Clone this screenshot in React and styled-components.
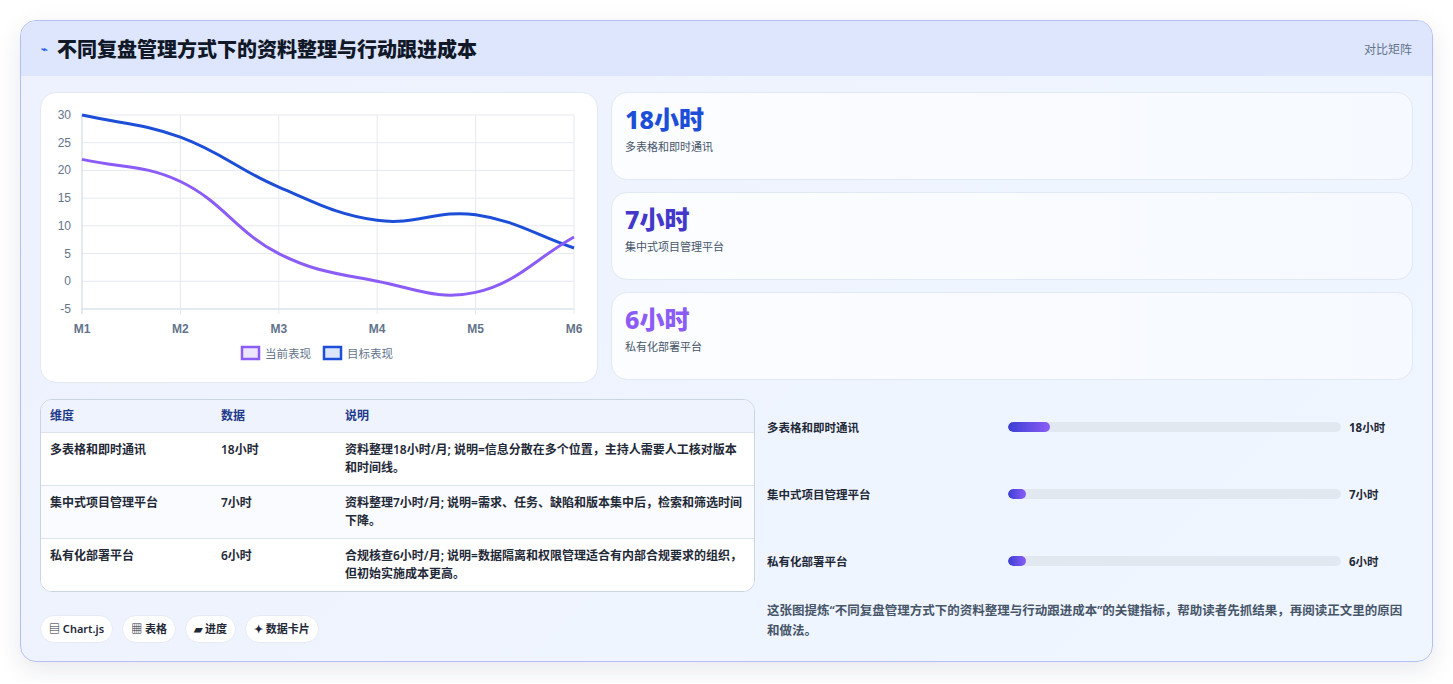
import React from "react";
import styled, { createGlobalStyle } from "styled-components";

const Global = createGlobalStyle`
  body { margin: 0; background: #fff; font-family: "Noto Sans", "Noto Sans CJK SC", sans-serif; }
`;
const Page = styled.div` padding: 20px 20px 21px 20px; `;
const Card = styled.div`
  border: 1px solid #b4c0f3; border-radius: 16px; overflow: hidden;
  background: linear-gradient(135deg, #edf2fe 0%, #f0f6ff 100%);
  box-shadow: 0 8px 24px rgba(30,41,90,0.10);
`;
const Header = styled.div`
  height: 55px; display: flex; align-items: center; justify-content: space-between;
  padding: 0 20px; background: #dde6fd;
`;
const Title = styled.h1`
  margin: 0; font-size: 20px; font-weight: 800; color: #111827; display: flex; align-items: center; gap: 9px;
`;
const Bolt = styled.span` color: #2563eb; font-size: 11px; `;
const Tag = styled.span` font-size: 12px; color: #64748b; `;
const Body = styled.div`
  padding: 16px 19px 18px 19px; display: grid; grid-template-columns: 715px 1fr; column-gap: 12px; row-gap: 16px;
`;
const Top = styled.div` grid-column: 1 / 3; display: grid; grid-template-columns: 558px 1fr; gap: 13px; `;
const Panel = styled.div` background: #fff; border: 1px solid #e2e8f4; border-radius: 16px; `;
const ChartBox = styled(Panel)` height: 289px; position: relative; `;
const Stats = styled.div` display: flex; flex-direction: column; gap: 12px; `;
const Stat = styled.div`
  height: 88px; box-sizing: border-box; padding: 10px 13px; border-radius: 16px;
  background: linear-gradient(90deg, #fbfdff, #f6f9ff); border: 1px solid #e2e8f4;
`;
const StatNum = styled.div` font-size: 25px; font-weight: 800; color: ${p => p.c}; line-height: 32px; `;
const StatLbl = styled.div` font-size: 11px; color: #475569; margin-top: 3px; `;
const Table = styled.div` border: 1px solid #cbd5e1; border-radius: 12px; overflow: hidden; background: #fff; `;
const Row = styled.div`
  display: grid; grid-template-columns: 171px 124px 1fr; padding: 0 8px 0 9px;
  background: ${p => p.head ? "#eef3fd" : p.alt ? "#f9fbfe" : "#fff"};
  border-top: ${p => p.first ? "none" : "1px solid #dde3ec"};
  min-height: ${p => p.head ? "32px" : "52px"}; align-items: ${p => p.head ? "center" : "start"};
  font-size: 12px; line-height: 18px; font-weight: 600;
  color: ${p => p.head ? "#1e3a8a" : "#1f2937"};
  & > div { padding-top: ${p => p.head ? "0" : "8px"}; }
`;
const Chips = styled.div` display: flex; gap: 9px; margin-top: 23px; `;
const Chip = styled.span`
  font-size: 11px; font-weight: 600; color: #1f2937; background: #fff; border: 1px solid #e6ebf3;
  border-radius: 14px; padding: 6px 8px; line-height: 14px;
`;
const Right = styled.div` display: flex; flex-direction: column; `;
const Bars = styled.div` display: flex; flex-direction: column; `;
const BarRow = styled.div`
  height: 67px; display: grid; grid-template-columns: 233px 333px 1fr; align-items: center; column-gap: 8px;
  font-size: 11.5px; font-weight: 700; color: #1f2937; padding-left: 0;
  &:first-child { margin-top: -6px; }
`;
const Track = styled.div` height: 10px; border-radius: 5px; background: #e2e8f0; overflow: hidden; `;
const Fill = styled.div` height: 100%; border-radius: 5px; background: linear-gradient(90deg, #3b3fd4, #8b5cf6); `;
const Note = styled.p` margin: 7px 0 0 0; font-size: 12.5px; line-height: 20px; color: #475569; font-weight: 600; `;

const L = 81 - 40, R = 573 - 40, T = 115 - 93, B = 309 - 93;
const xs = [0,1,2,3,4,5].map(i => L + i * (R - L) / 5);
const yv = v => T + (30 - v) * (B - T) / 35;
function path(data) {
  const p = data.map((v, i) => [xs[i], yv(v)]);
  const cps = p.map((c, i) => {
    const a = p[i - 1] || c, b = p[i + 1] || c;
    const d1 = Math.hypot(c[0] - a[0], c[1] - a[1]), d2 = Math.hypot(b[0] - c[0], b[1] - c[1]);
    const s = d1 + d2 || 1, fa = 0.4 * d1 / s, fb = 0.4 * d2 / s;
    return [[c[0] - fa * (b[0] - a[0]), c[1] - fa * (b[1] - a[1])], [c[0] + fb * (b[0] - a[0]), c[1] + fb * (b[1] - a[1])]];
  });
  let d = `M${p[0][0]},${p[0][1]}`;
  for (let i = 1; i < p.length; i++) d += ` C${cps[i-1][1].join(",")} ${cps[i][0].join(",")} ${p[i].join(",")}`;
  return d;
}

function Chart() {
  const ticks = [30,25,20,15,10,5,0,-5];
  return (
    <svg width="558" height="289" style={{ display: "block" }}>
      {ticks.map(t => <line key={t} x1={L} x2={R} y1={yv(t)} y2={yv(t)} stroke={t === -5 ? "#cbd5e1" : "#e5e9f0"} />)}
      {xs.map((x, i) => <line key={i} x1={x} x2={x} y1={T} y2={B + 5} stroke={i === 0 ? "#cbd5e1" : "#e5e9f0"} />)}
      {ticks.map(t => <text key={t} x={L - 11} y={yv(t) + 4} fontSize="12" fill="#64748b" textAnchor="end" fontFamily="Liberation Sans, sans-serif">{t}</text>)}
      {xs.map((x, i) => <text key={i} x={x} y={B + 24} fontSize="12" fontWeight="700" fill="#64748b" textAnchor="middle" fontFamily="Liberation Sans, sans-serif">M{i + 1}</text>)}
      <path d={path([30,26,17,11,12,6])} fill="none" stroke="#1d4ed8" strokeWidth="3" />
      <path d={path([22,18,5,0,-2,8])} fill="none" stroke="#8b5cf6" strokeWidth="3" />
      <rect x="201" y="254" width="17" height="12" fill="#ede4fd" stroke="#8b5cf6" strokeWidth="2.5" />
      <text x="224" y="265" fontSize="11.5" fill="#64748b">当前表现</text>
      <rect x="283" y="254" width="17" height="12" fill="#dbe6fb" stroke="#1d4ed8" strokeWidth="2.5" />
      <text x="306" y="265" fontSize="11.5" fill="#64748b">目标表现</text>
    </svg>
  );
}

const rows = [
  ["多表格和即时通讯", "18小时", "资料整理18小时/月; 说明=信息分散在多个位置，主持人需要人工核对版本和时间线。"],
  ["集中式项目管理平台", "7小时", "资料整理7小时/月; 说明=需求、任务、缺陷和版本集中后，检索和筛选时间下降。"],
  ["私有化部署平台", "6小时", "合规核查6小时/月; 说明=数据隔离和权限管理适合有内部合规要求的组织，但初始实施成本更高。"],
];
const bars = [["多表格和即时通讯", 12.5, "18小时"], ["集中式项目管理平台", 5.5, "7小时"], ["私有化部署平台", 5.5, "6小时"]];

export default function App() {
  return (
    <Page>
      <Global />
      <Card>
        <Header>
          <Title><Bolt>⌁</Bolt>不同复盘管理方式下的资料整理与行动跟进成本</Title>
          <Tag>对比矩阵</Tag>
        </Header>
        <Body>
          <Top>
            <ChartBox><Chart /></ChartBox>
            <Stats>
              <Stat><StatNum c="#1d4ed8">18小时</StatNum><StatLbl>多表格和即时通讯</StatLbl></Stat>
              <Stat><StatNum c="#4338ca">7小时</StatNum><StatLbl>集中式项目管理平台</StatLbl></Stat>
              <Stat><StatNum c="#8b5cf6">6小时</StatNum><StatLbl>私有化部署平台</StatLbl></Stat>
            </Stats>
          </Top>
          <div>
            <Table>
              <Row head first><div>维度</div><div>数据</div><div>说明</div></Row>
              {rows.map((r, i) => (
                <Row key={i} alt={i === 1}><div>{r[0]}</div><div>{r[1]}</div><div>{r[2]}</div></Row>
              ))}
            </Table>
            <Chips>
              <Chip>▤ Chart.js</Chip><Chip>▦ 表格</Chip><Chip>▰ 进度</Chip><Chip>✦ 数据卡片</Chip>
            </Chips>
          </div>
          <Right>
            <Bars>
              {bars.map((b, i) => (
                <BarRow key={i}><span>{b[0]}</span><Track><Fill style={{ width: b[1] + "%" }} /></Track><span>{b[2]}</span></BarRow>
              ))}
            </Bars>
            <Note>这张图提炼“不同复盘管理方式下的资料整理与行动跟进成本”的关键指标，帮助读者先抓结果，再阅读正文里的原因和做法。</Note>
          </Right>
        </Body>
      </Card>
    </Page>
  );
}
